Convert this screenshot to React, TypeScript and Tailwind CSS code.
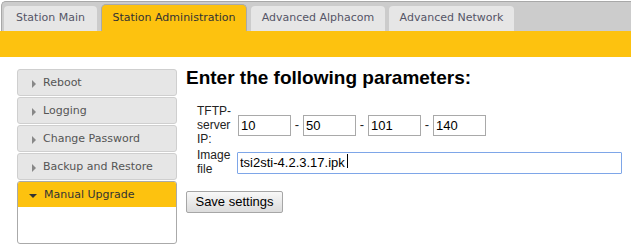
export default function App() {
  const tabs = [
    { label: "Station Main", w: "w-[93px]", active: false },
    { label: "Station Administration", w: "w-[146px]", active: true },
    { label: "Advanced Alphacom", w: "w-[134px]", active: false },
    { label: "Advanced Network", w: "w-[125px]", active: false },
  ];
  const menu = ["Reboot", "Logging", "Change Password", "Backup and Restore"];
  const ip = ["10", "50", "101", "140"];

  return (
    <div className="w-[631px] h-[251px] bg-white overflow-hidden">
      {/* Tab strip */}
      <div className="pt-px pl-px">
        <div className="h-[30px] bg-[#cccccc] border-t border-l border-[#a8a8a8] rounded-tl-[5px] flex items-end pl-[2px] gap-[4px]">
          {tabs.map((t) =>
            t.active ? (
              <div
                key={t.label}
                className={`${t.w} h-[27px] bg-[#fdc20f] border border-b-0 border-[#aaaaaa] rounded-t-[5px] flex items-center justify-center text-[11px] text-[#333] font-['DejaVu_Sans',sans-serif]`}
              >
                {t.label}
              </div>
            ) : (
              <div
                key={t.label}
                className={`${t.w} h-[25px] bg-[#e6e6e6] rounded-t-[4px] flex items-center justify-center text-[11px] text-[#555566] font-['DejaVu_Sans',sans-serif]`}
              >
                {t.label}
              </div>
            )
          )}
        </div>
      </div>
      <div className="h-[26px] bg-[#fdc20f]" />

      <div className="flex pt-[12px]">
        {/* Side menu */}
        <div className="ml-[17px] w-[160px] flex flex-col font-['DejaVu_Sans',sans-serif] text-[11px]">
          {menu.map((m) => (
            <div
              key={m}
              className="h-[27px] mb-[1px] pt-[2px] bg-[#e6e6e6] border border-[#cfcfcf] rounded-[3px] flex items-center pl-[14px] text-[#555]"
            >
              <span className="w-0 h-0 border-y-[4px] border-y-transparent border-l-[4px] border-l-[#888] mr-[7px]" />
              {m}
            </div>
          ))}
          <div className="h-[63px] border border-[#aaaaaa] rounded-[3px] overflow-hidden bg-white">
            <div className="h-[25px] pt-[2px] bg-[#fdc20f] flex items-center pl-[11px] text-[#333]">
              <span className="w-0 h-0 border-x-[4px] border-x-transparent border-t-[4px] border-t-[#333] mr-[7px]" />
              Manual Upgrade
            </div>
          </div>
        </div>

        {/* Form */}
        <div className="ml-[9px] flex flex-col font-['Liberation_Sans',Arial,sans-serif]">
          <h1 className="text-[19px] leading-[18px] font-bold text-black">Enter the following parameters:</h1>
          <div className="mt-[17px] flex flex-col gap-[2px]">
            <div className="flex items-center">
              <div className="ml-[11px] w-[38px] mr-[3px] text-[12px] leading-[14px] text-[#222]">TFTP-server IP:</div>
              {ip.map((v, i) => (
                <div key={v} className="flex items-center">
                  {i > 0 && <span className="w-[12px] text-center text-[13px] text-[#222]">-</span>}
                  <input
                    readOnly
                    defaultValue={v}
                    className="w-[53px] h-[21px] border border-[#a9a9a9] px-[2px] text-[13px] text-black outline-none"
                  />
                </div>
              ))}
            </div>
            <div className="flex items-center">
              <div className="ml-[11px] w-[38px] mr-[2px] text-[12px] leading-[14px] text-[#222]">Image file</div>
              <div className="relative">
                <input
                  readOnly
                  defaultValue="tsi2sti-4.2.3.17.ipk"
                  className="w-[385px] h-[22px] border border-[#7ea6e8] rounded-[1px] px-[2px] text-[13px] text-black outline-none"
                />
                <span className="absolute left-[110px] top-[4px] w-px h-[14px] bg-black" />
              </div>
            </div>
          </div>
          <div className="mt-[13px]">
            <button className="w-[97px] h-[22px] border border-[#a6a6a6] rounded-[2px] bg-gradient-to-b from-[#f8f8f8] to-[#dcdcdc] text-[13px] text-black">
              Save settings
            </button>
          </div>
        </div>
      </div>
    </div>
  );
}
